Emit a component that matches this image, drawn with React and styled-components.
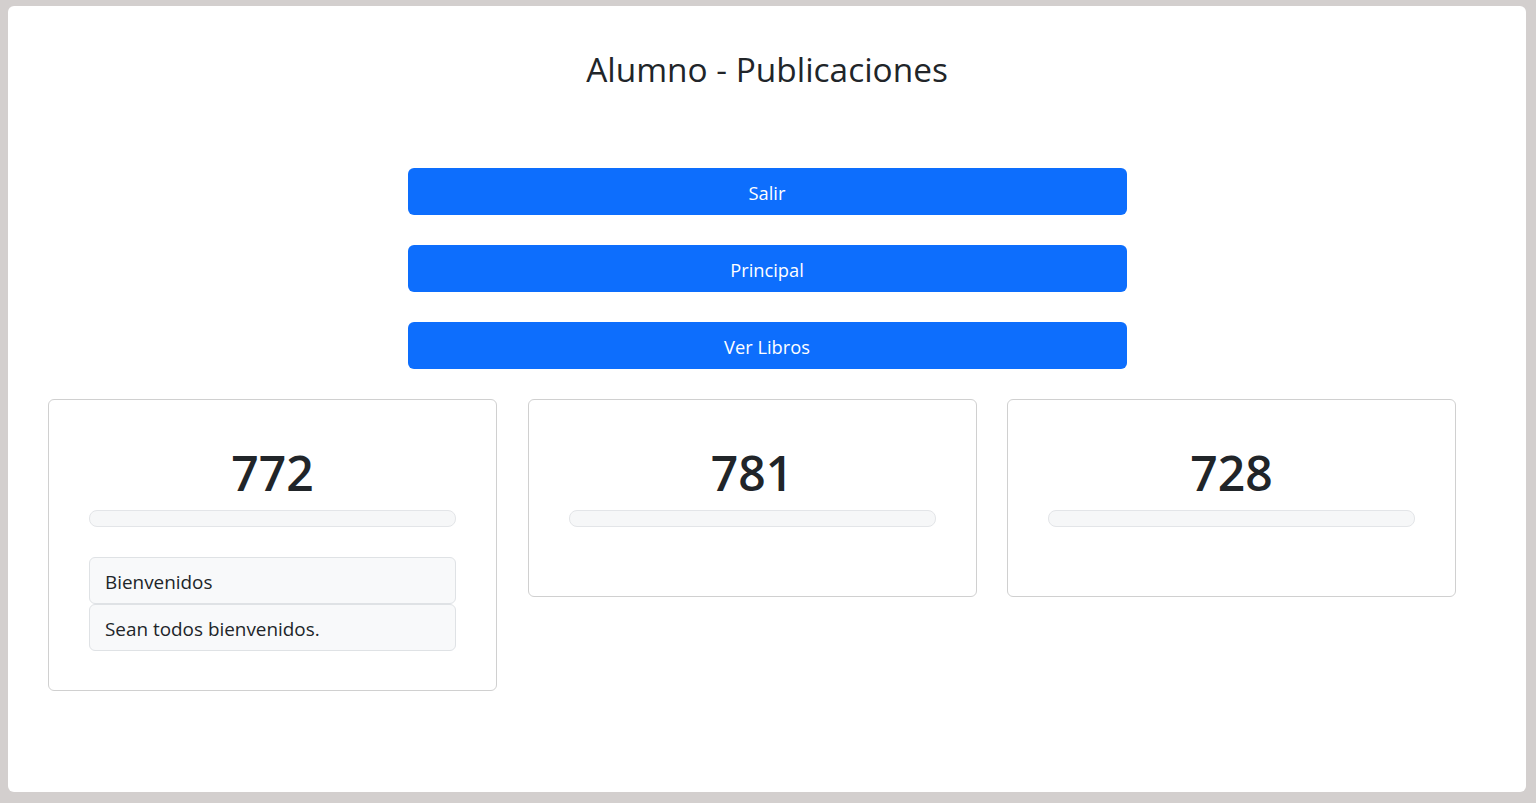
import React from "react";
import styled, { createGlobalStyle } from "styled-components";

const GlobalStyle = createGlobalStyle`
  html, body {
    margin: 0;
    padding: 0;
    background: #d3cfce;
  }
  body {
    font-family: "Open Sans", "Noto Sans", sans-serif;
    color: #212529;
  }
`;

const Frame = styled.div`
  padding: 6px 10px 11px 8px;
  height: 803px;
  box-sizing: border-box;
`;

const Panel = styled.div`
  background: #fff;
  border-radius: 6px;
  height: 100%;
  padding: 0 40px;
  box-sizing: border-box;
`;

const Title = styled.h2`
  margin: 0;
  padding-top: 41px;
  text-align: center;
  font-size: 33.4px;
  font-weight: 400;
  line-height: 44px;
`;

const Actions = styled.div`
  display: flex;
  flex-direction: column;
  align-items: center;
  gap: 30px;
  margin-top: 77px;
`;

const Button = styled.button`
  width: 719px;
  height: 47px;
  border: none;
  border-radius: 6px;
  background: #0d6efd;
  color: #fff;
  font-family: inherit;
  font-size: 18.3px;
  padding-top: 2px;
  cursor: pointer;
`;

const Cards = styled.div`
  display: flex;
  align-items: flex-start;
  gap: 30.5px;
  margin-top: 30px;
`;

const Card = styled.div`
  flex: 0 0 449px;
  box-sizing: border-box;
  border: 1px solid #d0d0d0;
  border-radius: 6px;
  padding: 38px 40px 39px;
`;

const Count = styled.div`
  text-align: center;
  font-size: 48px;
  font-weight: 600;
  line-height: 70px;
`;

const Progress = styled.div`
  height: 17px;
  box-sizing: border-box;
  margin-top: 2px;
  border: 1px solid #e3e5e8;
  border-radius: 8px;
  background: #f6f7f8;
`;

const List = styled.ul`
  list-style: none;
  margin: 30px 0 0;
  padding: 0;
  display: flex;
  flex-direction: column;
`;

const Item = styled.li`
  height: 47px;
  box-sizing: border-box;
  display: flex;
  align-items: center;
  padding: 2px 15px 0;
  border: 1px solid #dfe2e5;
  border-radius: 6px;
  background: #f8f9fa;
  font-size: 18.9px;
`;

const publicaciones = [
  { id: 1, votos: 772, mensajes: ["Bienvenidos", "Sean todos bienvenidos."] },
  { id: 2, votos: 781, mensajes: [] },
  { id: 3, votos: 728, mensajes: [] },
];

const App = () => {
  return (
    <>
      <GlobalStyle />
      <Frame>
        <Panel>
          <Title>Alumno - Publicaciones</Title>
          <Actions>
            <Button>Salir</Button>
            <Button>Principal</Button>
            <Button>Ver Libros</Button>
          </Actions>
          <Cards>
            {publicaciones.map((pub) => (
              <Card key={pub.id}>
                <Count>{pub.votos}</Count>
                <Progress />
                <List>
                  {pub.mensajes.map((m) => (
                    <Item key={m}>{m}</Item>
                  ))}
                </List>
              </Card>
            ))}
          </Cards>
        </Panel>
      </Frame>
    </>
  );
};

export default App;
